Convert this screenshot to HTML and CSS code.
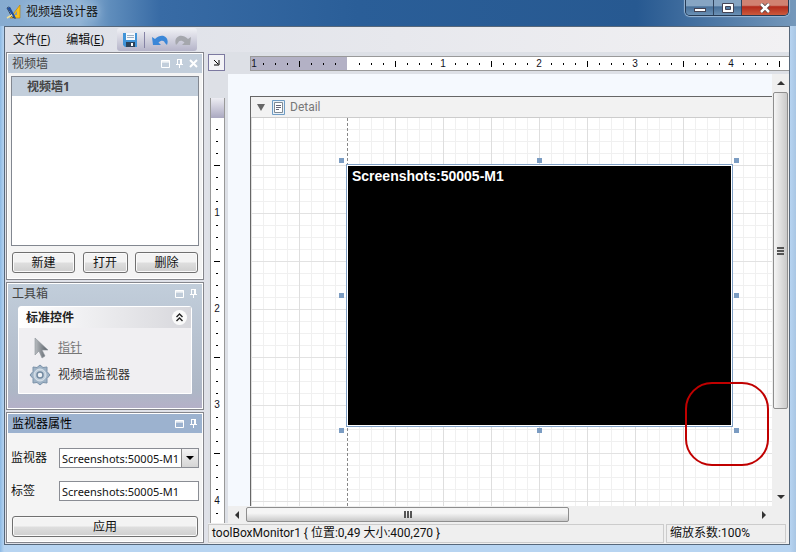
FILE: index.html
```html
<!DOCTYPE html>
<html lang="zh-CN">
<head>
<meta charset="utf-8">
<title>视频墙设计器</title>
<link rel="stylesheet" href="styles.css">
</head>
<body>
<svg class="defs" width="0" height="0" aria-hidden="true">
  <symbol id="max" viewBox="0 0 9 9"><path d="M.5 1.500h8v7h-8zM0 2h9M0 3h9" fill="none" stroke="#fff"/></symbol>
  <symbol id="pin" viewBox="0 0 9 9"><path d="M2 .5h5M2.500 0v6M5.500 0v6M6.500 0v6M1 5.500h7M4.500 6v3" fill="none" stroke="#fff"/></symbol>
  <symbol id="close" viewBox="0 0 9 9"><path d="M1 1l7 7M8 1L1 8" fill="none" stroke="#fff" stroke-width="2"/></symbol>
</svg>
<div class="window">
  <header class="titlebar">
    <svg class="logo" viewBox="0 0 16 16"><path d="M14 1v13H4z" fill="#f8c21c" stroke="#b87800" stroke-width=".6"/><path d="M11 7v4H8z" fill="#7d98b4"/><path d="M1 4c2-2 4 0 3 2l5 8-3-1z" fill="#e8eef6" stroke="#123" stroke-width=".8"/><path d="M1 4l7 10 2 1-1-3L4 3z" fill="#2050a0"/><path d="M1 14l5-3" stroke="#ed9" stroke-width="1.500"/></svg>
    <h1>视频墙设计器</h1>
    <div class="caption">
      <button aria-label="最小化"><svg width="12" height="10"><rect x=".5" y="5.500" width="11" height="3" fill="#fff" stroke="#445"/></svg></button>
      <button aria-label="最大化"><svg width="12" height="10"><path d="M.5.5h11v9H.5z" fill="#fff" stroke="#445"/><path d="M3.500 3.500h5v3h-5z" fill="#567da3" stroke="#445"/></svg></button>
      <button class="red" aria-label="关闭"><svg width="12" height="10"><path d="M2 1l8 8M10 1L2 9" stroke="#544" stroke-width="4"/><path d="M2 1l8 8M10 1L2 9" stroke="#fff" stroke-width="2.500"/></svg></button>
    </div>
  </header>
  <main class="client">
    <div class="menubar">
      <button class="menu">文件(<u>F</u>)</button>
      <button class="menu">编辑(<u>E</u>)</button>
      <div class="tools">
        <button aria-label="保存"><svg width="14" height="14"><path d="M0 0h14v14H2l-2-2z" fill="#3f93d8"/><path d="M3 0h9v7H3z" fill="#f4f8fc"/><path d="M4 2.500h7M4 4.500h7" stroke="#9aafc4"/><path d="M3 9h9v5H3z" fill="#2c4258"/><path d="M8 10h2v3H8z" fill="#fff"/></svg></button>
        <i></i>
        <button aria-label="撤销"><svg width="16" height="12"><path d="M0 3l1 8h8L6.500 8.500C9 6 12 6 13 9l2 2C18 3 10-2 3 5z" fill="#3b87d8"/></svg></button>
        <button aria-label="重做"><svg width="16" height="12"><path d="M16 3l-1 8H7l2.500-2.500C7 6 4 6 3 9l-2 2C-2 3 6-2 13 5z" fill="#a5a7ad"/></svg></button>
      </div>
    </div>
    <div class="work">
      <aside class="side">
        <section class="panel walls">
          <header class="head"><h2>视频墙</h2><svg><use href="#max"/></svg><svg><use href="#pin"/></svg><svg><use href="#close"/></svg></header>
          <ul class="list"><li>视频墙1</li></ul>
          <div class="buttons"><button class="btn new">新建</button><button class="btn open">打开</button><button class="btn del">删除</button></div>
        </section>
        <section class="panel toolbox">
          <header class="head"><h2>工具箱</h2><svg><use href="#max"/></svg><svg><use href="#pin"/></svg></header>
          <div class="group">
            <h3>标准控件<button aria-label="折叠"><svg width="9" height="9"><path d="M1.500 4l3-3 3 3M1.500 8l3-3 3 3" fill="none" stroke="#222" stroke-width="1.400"/></svg></button></h3>
            <button class="item off"><svg viewBox="0 0 22 22"><defs><linearGradient id="steel"><stop stop-color="#b8bcc0"/><stop offset="1" stop-color="#555c64"/></linearGradient></defs><path d="M6 1v17l4-4 3 7 3-2-3-6h6z" fill="url(#steel)" stroke="#8c9298" stroke-width=".6"/></svg><u>指针</u></button>
            <button class="item"><svg viewBox="0 0 22 22"><path d="M11 1l3 2.500 4-.5v4.500l3 3.500-3 3.500V19l-4-.5-3 2.500-3-2.500-4 .5v-4.500L1 11l3-3.500V3l4 .5z" fill="#9eb2c5" stroke="#7c93aa" stroke-linejoin="round"/><circle cx="11" cy="11" r="6" fill="#c3d0dc" stroke="#dbe4ec"/><circle cx="11" cy="11" r="3" fill="#eef1f5" stroke="#7189a0" stroke-width="1.500"/></svg>视频墙监视器</button>
          </div>
        </section>
        <section class="panel props">
          <header class="head active"><h2>监视器属性</h2><svg><use href="#max"/></svg><svg><use href="#pin"/></svg></header>
          <form>
            <label for="mon">监视器</label>
            <div class="combo"><select id="mon"><option>Screenshots:50005-M1</option></select><span></span></div>
            <label for="tag">标签</label>
            <input id="tag" value="Screenshots:50005-M1">
            <button class="btn apply" type="button">应用</button>
          </form>
        </section>
      </aside>
      <section class="designer">
        <button class="corner" aria-label="选择"><svg width="7" height="7"><path d="M1 1l4 4M6 1v5H1" fill="none" stroke="#000"/></svg></button>
        <div class="hruler"><svg>
          <defs><pattern id="ht" x="96" width="96" height="13" patternUnits="userSpaceOnUse"><path d="M12 6h1v2h-1zM24 6h1v2h-1zM36 6h1v2h-1zM48 4h1v6h-1zM60 6h1v2h-1zM72 6h1v2h-1zM84 6h1v2h-1z"/></pattern></defs>
          <rect width="96" height="13" fill="#b3b1c5"/><rect width="100%" height="13" fill="url(#ht)"/>
          <text x="3" y="10">1</text><text x="192" y="10">1</text><text x="288" y="10">2</text><text x="384" y="10">3</text><text x="480" y="10">4</text>
        </svg></div>
        <div class="vruler"><div class="margin"></div><svg>
          <defs><pattern id="vt" width="13" height="96" patternUnits="userSpaceOnUse"><path d="M5 11h2v1H5zM5 23h2v1H5zM5 35h2v1H5zM3 47h6v1H3zM5 59h2v1H5zM5 71h2v1H5zM5 83h2v1H5z"/></pattern></defs>
          <rect width="13" height="100%" fill="url(#vt)"/>
          <text x="6" y="98">1</text><text x="6" y="194">2</text><text x="6" y="290">3</text><text x="6" y="386">4</text>
        </svg></div>
        <div class="viewport">
          <div class="page">
            <header class="band"><svg width="8" height="7"><path d="M0 0h8L4 7z" fill="#666"/></svg>
              <svg width="13" height="15"><path d="M.5.5h12v14H.5z" fill="#e9f1f8" stroke="#6f9cc4"/><path d="M2.500 2.500h8v10h-8z" fill="#fff" stroke="#7f8a94"/><path d="M4 5.500h5M4 7.500h5M4 9.500h3" stroke="#667"/></svg>
              <span>Detail</span></header>
            <div class="grid">
              <div class="monitor">Screenshots:50005-M1<i class="n w"></i><i class="n c"></i><i class="n e"></i><i class="m w"></i><i class="m e"></i><i class="s w"></i><i class="s c"></i><i class="s e"></i><div class="mark"></div></div>
            </div>
          </div>
        </div>
        <div class="vbar"><svg width="8" height="5"><path d="M0 5l4-4 4 4z" fill="#333"/></svg><div class="thumb"><b></b></div><svg width="8" height="5"><path d="M0 0h8L4 4z" fill="#333"/></svg></div>
        <div class="hbar"><svg width="5" height="8"><path d="M5 0v8L1 4z" fill="#333"/></svg><div class="thumb"><b></b></div><svg width="5" height="8"><path d="M0 0v8l4-4z" fill="#333"/></svg></div>
        <footer class="status"><span>toolBoxMonitor1 { 位置:0,49 大小:400,270 }</span><span>缩放系数:100%</span></footer>
      </section>
    </div>
  </main>
</div>
</body>
</html>
```
FILE: styles.css
```css
* { box-sizing: border-box; }
body { margin: 0; font: 12px/16px "Open Sans", "Noto Sans CJK SC", sans-serif; color: #111; }
button { font: inherit; color: inherit; padding: 0; margin: 0; border: 0; background: none; }
h1, h2, h3, ul { margin: 0; padding: 0; font: inherit; list-style: none; }
svg { display: block; flex: none; overflow: hidden; }
.defs { position: absolute; }
.window { height: 100vh; display: flex; flex-direction: column; padding: 0 6px 7px 4px; background: linear-gradient(90deg, #8cb9e4, #b7d4f1 4px, #b7d4f1 calc(100% - 6px), #a9c6e4); }
.titlebar { height: 26px; flex: none; display: flex; align-items: flex-start; margin: 0 -6px 0 -4px; padding-left: 6px; background: linear-gradient(90deg, #86abd0, #8fb2d4 80px, #5f8dbc 110px, #386ba5 160px, #2a5e98 45%, #275991 80%, #7598bb); }
.logo { width: 16px; height: 16px; margin-top: 4px; }
h1 { font-size: 12px; margin: 4px auto 0 4px; text-shadow: 0 0 8px #cfe0f0; }
.caption { display: flex; margin-right: 7px; border: 1px solid #263b55; border-top: 0; border-radius: 0 0 5px 5px; overflow: hidden; box-shadow: 0 0 1px 1px #9cb9d6; }
.caption button { width: 28px; height: 15px; display: grid; place-items: center; background: linear-gradient(#86a5c3 40%, #476f98 45%, #6b91b5); border-right: 1px solid #30445e; }
.caption .red { width: 46px; background: linear-gradient(#d18272 35%, #b32b1c 45%, #cb5a3d); border: 0; }
.client { flex: 1; min-height: 0; display: flex; flex-direction: column; border: 1px solid #56677a; background: #dfe1e8; }
.menubar { height: 25px; flex: none; display: flex; align-items: center; background: linear-gradient(90deg, #dcdfe7, #f2f1f3); }
.menu { margin-left: 8px; margin-right: 8px; white-space: nowrap; }
.tools { display: flex; align-items: center; height: 23px; margin-left: 5px; padding: 0 6px; border-radius: 3px; background: linear-gradient(#f0f1f5, #b5b4c9); gap: 7px; }
.tools i { width: 1px; height: 16px; background: #8583a5; }
.work { flex: 1; min-height: 0; display: flex; gap: 4px; padding-left: 1px; }
.side { width: 198px; display: flex; flex-direction: column; gap: 2px; padding-bottom: 1px; }
.panel { border: 1px solid #85868c; padding: 1px; background: #f4f4f4; box-shadow: inset 0 0 0 1px #fff; }
.head { height: 19px; display: flex; align-items: center; gap: 5px; padding: 0 4px; background: #c2cedb; color: #444; }
.head h2 { flex: 1; }
.head svg { width: 9px; height: 9px; }
.head.active { background: #9cb2cf; color: #000; }
.walls { flex: 1; display: flex; flex-direction: column; }
.list { flex: 1; margin: 3px 3px 6px; border: 1px solid #828790; background: #fff; }
.list li { height: 19px; line-height: 19px; padding-left: 15px; font-weight: 700; color: #444; background: #c2cedb; }
.buttons { display: flex; justify-content: space-between; padding: 0 4px; margin-bottom: 5px; }
.btn { height: 21px; border: 1px solid #707070; border-radius: 3px; background: linear-gradient(#f3f3f3 48%, #dedede 52%, #cfcfcf); box-shadow: inset 0 0 0 1px #fafafa; }
.new, .del { width: 63px; }
.open { width: 45px; }
.toolbox { height: 128px; background: linear-gradient(#c2cedb, #adb7c6 85%, #b5b0c8); }
.toolbox .head { background: none; }
.group { margin: 3px 10px 0; height: 88px; border: 1px solid #fff; border-radius: 3px 3px 0 0; background: #f0eff2; }
.group h3 { height: 21px; display: flex; align-items: center; justify-content: space-between; padding: 0 4px 0 7px; font-weight: 700; background: linear-gradient(90deg, #fff, #d7d7dc); color: #222; }
.group h3 button { width: 15px; height: 15px; display: grid; place-items: center; border-radius: 50%; background: #fafafa; }
.item { display: flex; align-items: center; gap: 7px; height: 27px; margin-left: 10px; color: #333; }
.item:nth-of-type(1) { margin-top: 6px; }
.item svg { width: 22px; height: 22px; }
.off { color: #777; }
.props { height: 131px; }
.props form { display: grid; grid-template-columns: 48px 1fr; align-items: center; row-gap: 13px; padding: 15px 3px 0; }
.combo { display: flex; position: relative; }
.combo span { position: absolute; right: 1px; top: 1px; width: 17px; height: 18px; border-left: 1px solid #888; background: linear-gradient(#f3f3f3, #d5d5d5); pointer-events: none; }
.combo span::after { content: ""; position: absolute; left: 4px; top: 7px; border: 4px solid transparent; border-top-color: #000; border-bottom: 0; }
select, input { width: 100%; height: 20px; margin: 0; padding: 0 2px; border: 1px solid #8a8d94; border-radius: 0; background: #fff; font: 11px "Noto Sans", sans-serif; color: #111; appearance: none; }
.apply { grid-column: 1 / 3; margin: 2px 1px 0; }
.designer { flex: 1; min-width: 0; display: grid; grid-template: 22px 1fr 17px 21px / 20px 1fr 17px; background: #dde0e6; }
.corner { width: 17px; height: 17px; margin-top: 2px; border: 1px solid #7c79a0; display: grid; place-items: center; background: #f3f3f6; }
.hruler { grid-column: 2 / 4; height: 15px; margin: 4px 0 0 22px; border: 1px solid #999; border-right: 0; background: #fff; }
.hruler svg { width: 100%; height: 13px; }
.hruler text, .vruler text { font: 10px "Liberation Sans", sans-serif; text-anchor: middle; fill: #112; }
.vruler { grid-row: 2 / 4; display: flex; flex-direction: column; width: 15px; margin: 24px 0 0 2px; border: 1px solid #999; border-width: 0 1px; background: #fff; }
.margin { height: 20px; background: linear-gradient(#ededf3, #aaa8c0); }
.vruler svg { width: 13px; flex: 1; min-height: 0; }
.viewport { display: flex; padding: 22px 0 0 22px; background: #f5f9fe; min-width: 0; }
.page { flex: 1; min-width: 0; display: flex; flex-direction: column; border: 1px solid #666; border-width: 1px 0 0 1px; }
.band { height: 21px; display: flex; align-items: center; padding-left: 6px; background: #f2f2f2; border-bottom: 1px solid #ccc; gap: 7px; font: 12px Roboto, sans-serif; color: #777; }
.band span { margin-left: -2px; }
.grid { position: relative; flex: 1; overflow: hidden; background:
  repeating-linear-gradient(#888 0 3px, #fff 3px 5px) 96px 0 / 1px 100% no-repeat,
  linear-gradient(90deg, #dedede 1px, transparent 1px) 0 0 / 48px 48px,
  linear-gradient(#e2e2e2 1px, transparent 1px) 0 -1px / 48px 48px,
  linear-gradient(90deg, #f0f0f0 1px, transparent 1px) 0 0 / 12px 12px,
  linear-gradient(#f0f0f0 1px, transparent 1px) 0 -1px / 12px 12px, #fff; }
.monitor { position: absolute; left: 95px; top: 46px; width: 387px; height: 263px; border: 1px solid #7f9fc4; padding: 4px 5px; background: #000; box-shadow: inset 0 0 0 1px #fff; color: #fff; font: bold 14px/15px "Liberation Sans", sans-serif; }
.monitor i { position: absolute; width: 5px; height: 5px; background: #7b9cc2; }
.n { top: -7px; } .m { top: 128px; } .s { bottom: -7px; }
.w { left: -8px; } .c { left: 190px; } .e { right: -7px; }
.mark { position: absolute; left: 338px; top: 217px; width: 84px; height: 84px; border: 2px solid #c00000; border-radius: 27px; }
.vbar, .hbar { display: flex; align-items: center; background: #efefef; }
.vbar { flex-direction: column; padding: 6px 0; gap: 7px; }
.thumb { display: grid; place-items: center; border: 1px solid #8e8e8e; border-radius: 2px; }
.vbar .thumb { width: 15px; height: 317px; background: linear-gradient(90deg, #f5f5f5, #c9c9c9); }
.vbar svg:last-child { margin-top: auto; }
.hbar { grid-column: 2 / 4; padding: 0 22px 0 6px; gap: 7px; }
.hbar .thumb { width: 323px; height: 15px; background: linear-gradient(#f5f5f5 40%, #c9c9c9); }
.hbar svg:last-child { margin-left: auto; }
.thumb b { width: 8px; height: 7px; background: repeating-linear-gradient(90deg, #555 0 2px, transparent 2px 3px); }
.vbar .thumb b { width: 7px; height: 8px; background: repeating-linear-gradient(#555 0 2px, transparent 2px 3px); }
.status { grid-column: 1 / 4; display: flex; gap: 2px; padding: 1px 3px 1px 0; background: #efefef; font-family: Roboto, "Noto Sans CJK SC", sans-serif; }
.status span { flex: 1; border: 1px solid #ccc; padding-left: 3px; line-height: 17px; white-space: nowrap; }
.status span:last-child { flex: none; width: 120px; }
```
